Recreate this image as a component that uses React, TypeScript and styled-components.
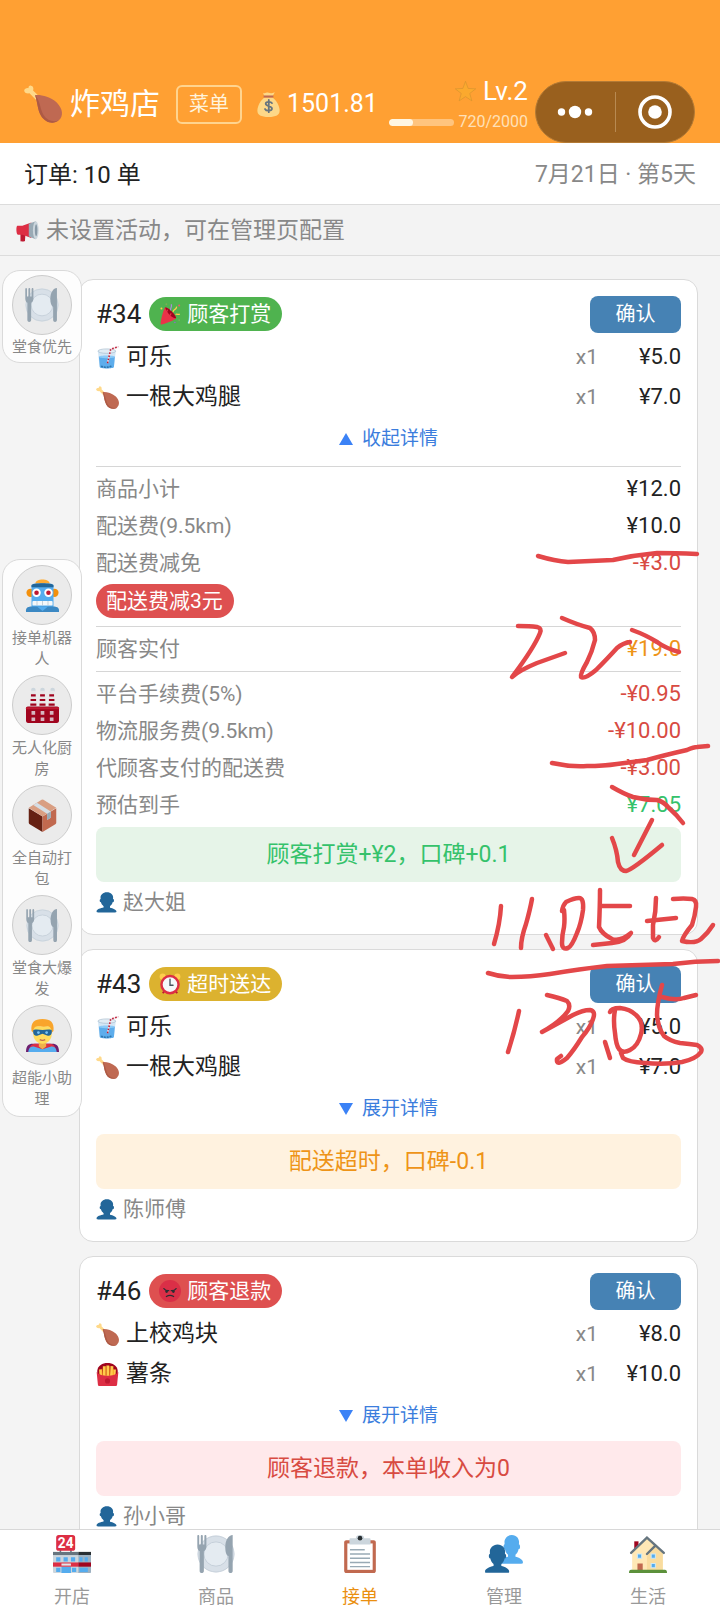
import React from 'react';
import styled, { createGlobalStyle } from 'styled-components';

const GlobalStyle = createGlobalStyle`
  *, *::before, *::after { box-sizing: border-box; }
  body { margin: 0; background: #f4f4f4; }
  body, button { font-family: Roboto, "Noto Sans CJK SC", sans-serif; }
  button { margin: 0; padding: 0; border: 0; background: none; color: inherit; cursor: pointer; }
  svg { display: block; flex: none; }
`;

/* ---------- icons ---------- */

type IconName =
  | 'drumstick' | 'money' | 'star' | 'megaphone' | 'plate' | 'robot' | 'factory' | 'box' | 'hero'
  | 'party' | 'cup' | 'clock' | 'angry' | 'fries' | 'store' | 'clipboard' | 'person' | 'people' | 'house';

const BUST =
  'M24 26.799v-2.566c2-1.348 4.08-3.779 4.703-6.896.186.103.206.17.413.17.991 0 1.709-1.287 1.709-2.873 0-1.562-.823-2.827-1.794-2.865.187-.674.293-1.577.293-2.735C29.324 5.168 26 .527 18.541.527c-6.629 0-10.777 4.641-10.777 8.507 0 1.123.069 2.043.188 2.755-.911.137-1.629 1.352-1.629 2.845 0 1.587.804 2.873 1.796 2.873.206 0 .025-.067.209-.17C8.952 20.453 11 22.885 13 24.232v2.414c-5 .645-12 3.437-12 6.23v1.061C1 35 2.076 35 3.137 35h29.725C33.924 35 35 35 35 33.938v-1.061c0-2.615-6-5.225-11-6.078z';

const drawings: Record<IconName, React.ReactNode> = {
  drumstick: (
    <>
      <path fill="#FFD98A" d="M14 10.500 8.600 5.200C9.400 3.200 8.600.8 6.700.6 4.900.4 4.200 1.600 4.300 3 2.300 2.700.3 3.600.2 5.200c-.1 1.900 2.500 3.300 5 2.700l6 6z" />
      <path fill="#BF6952" d="M10.500 9.500C16 9 24.500 10.500 31 16.500c6 6 6.500 13 2 17-5 4.200-13 2.500-17-4.500-3.200-5.800-3-12-5.500-19.500z" />
      <path fill="#AD5A45" d="M10.500 9.500C13 17 12.800 23.200 16 29c4 7 12 8.700 17 4.500-5 2-11 .5-14.500-5C15 22.500 15.500 15 10.500 9.500z" />
    </>
  ),
  money: (
    <>
      <path fill="#FDD888" d="M12 8h12c5 4 10 12 10 19 0 6-5 9-16 9S2 33 2 27C2 20 7 12 12 8z" />
      <path fill="#FDD888" d="M10 1c3 2 5-1 8 0s5 1 9-.5L24 6H12z" />
      <path fill="#BF6952" d="M11 5h14v3H11z" />
      <path fill="none" stroke="#67757F" strokeWidth="2.600" strokeLinecap="round" d="M23 16c-1-2-9-3-9 1 0 4 9 2.500 9 6.800 0 4-8.500 4-10 .7M18.400 11.500v17.500" />
    </>
  ),
  star: (
    <path fill="#FBA92E" stroke="#D0902F" strokeWidth="1" strokeLinejoin="round" d="M18 .5l4.500 12.300 13 .6-10.200 8 3.600 12.600L18 26.800 7.100 34l3.600-12.600L.5 13.400l13-.6z" />
  ),
  megaphone: (
    <>
      <path fill="#BE1931" d="M7 18l8 1-1 14c0 1-7 1-7 0z" />
      <path fill="#DD2E44" d="M2 9h8l14-5v24l-14-5H3C0 23 0 9 2 9z" />
      <path fill="#99AAB5" d="M20 6 31 2v28l-11-4z" />
      <ellipse cx="31" cy="16" rx="4.500" ry="14" fill="#CCD6DD" />
      <ellipse cx="31.500" cy="16" rx="2" ry="9.500" fill="#8899A6" />
    </>
  ),
  plate: (
    <>
      <circle cx="18" cy="18" r="17.500" fill="#D8E0E8" />
      <circle cx="18" cy="18" r="17" fill="none" stroke="#C6D0D9" strokeWidth=".8" />
      <circle cx="18" cy="18" r="11.500" fill="#E4EBF1" stroke="#C3CED8" strokeWidth=".9" />
      <path fill="#95A4B0" d="M.3 1c0-1.300 1.800-1.300 1.800 0v8h1.500V1c0-1.300 1.900-1.300 1.900 0v8H7V1c0-1.300 1.900-1.300 1.900 0v10c0 2.500-1 3.800-2.400 4.500V34c0 2.700-4 2.700-4 0V15.500C1.200 14.800.3 13.500.3 11z" />
      <path fill="#95A4B0" d="M33.800 0v34c0 2.700-4 2.700-4 0V20c-2-.8-3-4-3-8.500C26.800 5 30 0 33.800 0z" />
    </>
  ),
  robot: (
    <>
      <circle cx="5" cy="15" r="4.500" fill="#F4900C" />
      <circle cx="31" cy="15" r="4.500" fill="#F4900C" />
      <path fill="#FFAC33" d="M10 5C11-1 25-1 26 5z" />
      <path fill="#55ACEE" d="M6 8c0-3 3-3 12-3s12 0 12 3v23H6z" />
      <path fill="#226699" d="M6 7c0-3 24-3 24 0v2H6z" />
      <path fill="#3B88C3" d="M0 34c0-3 3-4 6-4h24c3 0 6 1 6 4v2H0z" />
      <path fill="#55ACEE" d="M12 30h12l-6 5z" />
      <circle cx="11.500" cy="15" r="4.600" fill="#FFF" />
      <circle cx="24.500" cy="15" r="4.600" fill="#FFF" />
      <circle cx="11.500" cy="15" r="2.500" fill="#BE1931" />
      <circle cx="24.500" cy="15" r="2.500" fill="#BE1931" />
      <rect x="7" y="24" width="22" height="5" rx="1" fill="#F5F8FA" />
      <path stroke="#B5C2CC" strokeWidth=".8" d="M12 24v5M18 24v5M24 24v5" />
    </>
  ),
  factory: (
    <>
      <circle cx="8" cy="1" r="2.500" fill="#CCD6DD" />
      <circle cx="18" cy="1" r="2.500" fill="#CCD6DD" />
      <circle cx="29" cy="1" r="2.500" fill="#CCD6DD" />
      {[8, 18, 28].map((x) => (
        <g key={x}>
          <path fill="#E6E7E8" d={`M${x - 2.5} 2h5l1 18h-7z`} />
          <path stroke="#A0041E" strokeWidth="2.400" d={`M${x - 2.6} 7h5.200M${x - 3} 12h6M${x - 3.3} 17h6.600`} />
        </g>
      ))}
      <rect y="19" width="36" height="18" rx="2" fill="#A0041E" />
      <path fill="#BE1931" d="M0 20h36v2H0z" />
      <path fill="#D6B6C0" d="M6 24h4v4H6zM16 24h4v4h-4zM26 24h4v4h-4zM6 31h4v4H6zM16 31h4v4h-4zM26 31h4v4h-4z" />
    </>
  ),
  box: (
    <>
      <path fill="#662113" d="M3 10l15 9v17L4 27.500Q3 27 3 26z" />
      <path fill="#C1694F" d="M33 10l-15 9v17l14-8.500q1-.5 1-1.500z" />
      <path fill="#D99E82" d="M3 9.500 17 .8q1-.6 2 0l14 8.700-15 9.500z" />
      <path fill="#D5DDE4" d="M8 6.500l4-2.500 15 9.500v7l-4 2.500v-7z" />
      <path fill="#99AAB5" d="M23 16l4-2.500v7L23 23z" />
    </>
  ),
  hero: (
    <>
      <path fill="#6D1F6F" d="M0 36c0-7 3-9 7-9h22c4 0 7 2 7 9z" />
      <path fill="#DD2E44" d="M3 36c1-8 4-9 8-9h14c4 0 7 1 8 9z" />
      <path fill="#55ACEE" d="M2.500 36c.5-5 3-6 6-6l9.500 3 9.500-3c3 0 5.500 1 6 6z" />
      <path fill="#EFB04D" d="M14 23h8v7l-4 3-4-3z" />
      <path fill="#FFDC5D" d="M8 8h20v9c0 6-5 10-10 10S8 23 8 17z" />
      <path fill="#F9A52B" d="M6 13C5 4 9 0 18 0s13 4 12 13l-2 2c0-4-1-6-4-7-5 1-9 0-11 0-4 0-5 3-5 7z" />
      <path fill="#226699" d="M8 12c4-1 7 0 10 0s6-1 10 0c1 5-2 7-5 6l-5-2-5 2c-3 1-6-1-5-6z" />
      <circle cx="13.500" cy="14.800" r="1.500" fill="#7AC4F3" />
      <circle cx="22.500" cy="14.800" r="1.500" fill="#7AC4F3" />
      <path fill="none" stroke="#C1694F" strokeWidth="1.400" d="M15 22.500q3 1.500 6 0" />
    </>
  ),
  party: (
    <>
      <path fill="#EA3349" d="M11 7C16 9 26 18 28 24c1 3-23 12-25 11S8 6 11 7z" />
      <path fill="#A0041E" d="M11 7c6 2 15 11 17 17 0 3-8-1-12-6S9 7 11 7z" />
      <path fill="none" stroke="#EA3349" strokeWidth="2" d="M14 11 7 27M20 17 12 29" />
      <path fill="none" stroke="#AA8DD8" strokeWidth="2" d="M19 12c-1-5 3-4 1-10" />
      <path fill="none" stroke="#FFCC4D" strokeWidth="2" d="M23 15c0-6 5-2 6-9M27 19c3-2 4 1 7-1" />
      <circle cx="4" cy="9" r="1.600" fill="#FFCC4D" />
      <circle cx="12" cy="2" r="1.500" fill="#77B255" />
      <circle cx="33" cy="4" r="1.700" fill="#EA596E" />
      <circle cx="33" cy="28" r="1.500" fill="#77B255" />
      <circle cx="26" cy="32" r="1.300" fill="#9266CC" />
    </>
  ),
  cup: (
    <>
      <path fill="#D5E7F5" d="M3 8h28l-3 25c-.5 3-22 3-22.500 0z" />
      <path fill="#5DADEC" d="M4.500 17h25L28 33c-.5 3-21.500 3-22 0z" />
      <path fill="#8CCAF7" d="M4.500 17c0-3 25-3 25 0s-25 3-25 0z" />
      <ellipse cx="17" cy="8" rx="14" ry="3.500" fill="#E1ECF4" stroke="#A5BACB" strokeWidth="1" />
      <path fill="none" stroke="#F3E1E8" strokeWidth="2.400" d="M18 27 23 5l12-4" />
      <path fill="none" stroke="#BE1931" strokeWidth="2.400" strokeDasharray="2.500 2.500" d="M18 27 23 5l12-4" />
      <path fill="none" stroke="#2F76AD" strokeWidth="2.600" strokeDasharray="1 3.500" strokeLinecap="round" d="M9 32q8 3 16-1" />
    </>
  ),
  clock: (
    <>
      <circle cx="6" cy="6" r="5" fill="#FFCC4D" />
      <circle cx="30" cy="6" r="5" fill="#FFCC4D" />
      <path stroke="#BE1931" strokeWidth="3" d="M6 33l4-4M30 33l-4-4" />
      <circle cx="18" cy="19" r="14" fill="#F5F8FA" stroke="#DD2E44" strokeWidth="4" />
      <path fill="none" stroke="#46535C" strokeWidth="2.200" strokeLinecap="round" d="M18 10v10h5" />
    </>
  ),
  angry: (
    <>
      <circle cx="18" cy="18" r="18" fill="#DA2F47" />
      <path fill="none" stroke="#292F33" strokeWidth="2" strokeLinecap="round" d="M8 14q3 4 8 3.500M28 14q-3 4-8 3.500M12 27q6-4 12 0" />
      <circle cx="12.500" cy="19" r="2.200" fill="#292F33" />
      <circle cx="23.500" cy="19" r="2.200" fill="#292F33" />
    </>
  ),
  fries: (
    <>
      <path fill="#A0041E" d="M2 12C3 4 10 0 18 0s15 4 16 12v8H2z" />
      <path fill="none" stroke="#FFCC4D" strokeWidth="4.500" d="M8 22 7 10M13 23V5M18.500 23V4M24 23 25 5M28 22l1-12" />
      <path fill="none" stroke="#F4900C" strokeWidth="1" d="M10 22 9.500 9M15.600 23V5M21.300 23V5M27 22V9" />
      <path fill="#DD2E44" d="M1 14c6 8 28 8 34 0l-2 20c-.3 1.500-1 2-2 2H5c-1 0-1.700-.5-2-2z" />
      <circle cx="18" cy="28" r="4" fill="#BE1931" />
    </>
  ),
  store: (
    <>
      <path stroke="#66757F" strokeWidth="1.500" d="M7 14v4M17 14v4" />
      <rect x="3" y="0" width="18" height="15" rx="2.500" fill="#DD2E44" />
      <text x="12" y="12" textAnchor="middle" fontFamily="Roboto, sans-serif" fontWeight="700" fontSize="13" fill="#FFF">24</text>
      <path fill="#CCD6DD" d="M0 17h36v18q0 1-1 1H1q-1 0-1-1z" />
      <path fill="#66757F" d="M0 16h24v3H0z" />
      <path fill="#292F33" d="M24 16h12v3H24z" />
      <path fill="#9DB1C1" d="M24 19h12v16q0 1-1 1H24z" />
      <path fill="#55ACEE" d="M3 21h4v4H3zM10 21h4v4h-4zM17 21h4v4h-4zM25 21h3v4h-3zM30 21h3v4h-3zM3 31h4v4H3zM8 30h9v6H8zM18 31h4v4h-4zM25 31h8v4h-8z" />
      <path fill="#DD2E44" d="M0 26h24v4H0z" />
      <path fill="#A0041E" d="M24 26h12v4H24z" />
      <path fill="#E1E8ED" d="M8 27h9v2H8z" />
    </>
  ),
  clipboard: (
    <>
      <path fill="#C1694F" d="M33 34c0 1.100-.9 2-2 2H5c-1.100 0-2-.9-2-2V7c0-1.100.9-2 2-2h26c1.100 0 2 .9 2 2z" />
      <path fill="#FFF" d="M6 8h24v25H6z" />
      <path fill="#CCD6DD" d="M9 3h5c0-4 8-4 8 0h5q1 0 1 1v5H8V4q0-1 1-1z" />
      <circle cx="18" cy="3" r="2.200" fill="#292F33" />
      <path stroke="#99AAB5" strokeWidth="1.300" d="M8.500 14h14M8.500 18h19M8.500 22h19M8.500 26h19M8.500 30h19" />
    </>
  ),
  person: <path fill="#226699" d={BUST} />,
  people: (
    <>
      <path fill="#55ACEE" transform="translate(13.500 -.5) scale(.64 .79)" d={BUST} />
      <path fill="#226699" transform="translate(-.6 8.500) scale(.67 .78)" d={BUST} />
    </>
  ),
  house: (
    <>
      <path fill="#A0041E" d="M5 6h4v9H5z" />
      <path fill="#FFE8B6" d="M3 16 17 3l15 13v18H3z" />
      <path fill="#F9DC9F" d="M17 17l7-7 8 7v17H17z" />
      <path fill="none" stroke="#66757F" strokeWidth="2.200" strokeLinecap="round" d="M2 17 17 2.500 33 17M17 18l8-8" />
      <path fill="#55ACEE" stroke="#CDE8F4" strokeWidth="1" d="M8 18h4v4H8zM21 18h4v4h-4zM21 27h4v4h-4z" />
      <path fill="#C1694F" d="M8 27h5v7H8z" />
      <path fill="#5C913B" d="M2 33h32q2 0 2 3H0q0-3 2-3z" />
    </>
  ),
};

const Icon = ({ name, size }: { name: IconName; size: number }) => (
  <svg width={size} height={size} viewBox="0 0 36 36" overflow="visible" aria-hidden="true">
    {drawings[name]}
  </svg>
);

/* ---------- page frame ---------- */

const Page = styled.div`
  display: flex;
  flex-direction: column;
  height: 100vh;
  overflow: hidden;
  background: #f4f4f4;
  color: #222;
`;

const Header = styled.header`
  display: flex;
  align-items: center;
  flex: none;
  height: 143px;
  padding: 65px 25px 0 24px;
  background: #ffa033;
  color: #fff;
`;

const ShopName = styled.h1`
  margin: 0 16px 0 8px;
  font-size: 30px;
  font-weight: 400;
  line-height: 40px;
  white-space: nowrap;
`;

const MenuButton = styled.button`
  width: 66px;
  height: 39px;
  border: 2px solid #ffd48f;
  border-radius: 6px;
  color: #fff3dc;
  font-size: 20px;
  line-height: 28px;
`;

const Balance = styled.div`
  display: flex;
  align-items: center;
  gap: 6px;
  margin-left: 14px;
  font-size: 25px;
  line-height: 32px;
`;

const LevelBlock = styled.div`
  width: 139px;
  margin: 6px 7px 0 auto;
`;

const LevelLine = styled.div`
  display: flex;
  align-items: center;
  justify-content: flex-end;
  gap: 7px;
  font-size: 26px;
  line-height: 30px;
`;

const ProgressLine = styled.div`
  display: flex;
  align-items: center;
  gap: 4px;
  color: #ffe0b8;
  font-size: 16px;
  line-height: 32px;
`;

const Track = styled.div`
  flex: 1;
  height: 7px;
  border-radius: 4px;
  overflow: hidden;
  background: #ffc47e;
`;

const Fill = styled.div`
  height: 100%;
  border-radius: 4px;
  background: #fff6e2;
`;

const Capsule = styled.div`
  display: flex;
  align-items: center;
  align-self: flex-end;
  width: 160px;
  height: 62px;
  border: 1px solid #b37a35;
  border-radius: 31px;
  background: #99601e;
`;

const CapsuleButton = styled.button`
  display: flex;
  flex: 1;
  align-items: center;
  justify-content: center;
  height: 40px;
  & + & { border-left: 1px solid #b88a52; }
`;

const OrdersBar = styled.div`
  display: flex;
  align-items: center;
  justify-content: space-between;
  flex: none;
  height: 62px;
  padding: 2px 24px 0;
  border-bottom: 1px solid #dcdcdc;
  background: #fff;
`;

const OrderCount = styled.span`
  font-size: 24px;
  line-height: 32px;
`;

const Today = styled.span`
  color: #888;
  font-size: 23px;
  line-height: 32px;
`;

const Notice = styled.div`
  display: flex;
  align-items: center;
  gap: 7px;
  flex: none;
  height: 51px;
  padding: 2px 16px 0;
  border-bottom: 1px solid #dcdcdc;
  background: #f3f3f3;
  color: #888;
  font-size: 23px;
  line-height: 32px;
`;

const Scroller = styled.main`
  flex: 1;
  min-height: 0;
  overflow-y: auto;
  scrollbar-width: none;
`;

const Content = styled.div`
  position: relative;
  display: flex;
  align-items: flex-start;
`;

/* ---------- helper docks ---------- */

const Docks = styled.aside`
  z-index: 1;
  display: flex;
  flex: none;
  flex-direction: column;
  gap: 196px;
  width: 80px;
  margin: 14px -3px 0 2px;
`;

const Dock = styled.div<{ $compact?: boolean }>`
  display: flex;
  flex-direction: column;
  align-items: center;
  gap: 5px;
  padding: ${(p) => (p.$compact ? '4px 0' : '5px 0 6px')};
  border: 1px solid #dadada;
  border-radius: 18px;
  background: #fdfdfd;
`;

const Helper = styled.button<{ $compact?: boolean }>`
  display: flex;
  flex-direction: column;
  align-items: center;
  gap: ${(p) => (p.$compact ? 2 : 3)}px;
  width: 61px;
  color: #888;
  font-size: 15px;
  line-height: 21px;
`;

const HelperCircle = styled.span`
  display: flex;
  align-items: center;
  justify-content: center;
  width: 60px;
  height: 60px;
  border: 1px solid #ccc;
  border-radius: 50%;
  background: #ebebeb;
`;

/* ---------- order cards ---------- */

const CardList = styled.div`
  display: flex;
  flex: 1;
  flex-direction: column;
  gap: 14px;
  min-width: 0;
  padding: 23px 22px 16px 0;
`;

const Card = styled.article`
  padding: 16px;
  border: 1px solid #dadada;
  border-radius: 14px;
  background: #fff;
`;

const CardHeader = styled.header`
  display: flex;
  align-items: center;
  gap: 8px;
  height: 36px;
  margin-bottom: 5px;
`;

const OrderNo = styled.h2`
  margin: 0;
  font-size: 26px;
  font-weight: 400;
  line-height: 34px;
`;

const tones = {
  green: { tag: '#4fb34f', soft: '#e6f4e8', text: '#35c26b' },
  yellow: { tag: '#dcb22f', soft: '#fff2df', text: '#ee9418' },
  red: { tag: '#de5050', soft: '#ffe9eb', text: '#d84b42' },
};
type Tone = keyof typeof tones;

const Tag = styled.span<{ $tone: Tone }>`
  display: inline-flex;
  align-items: center;
  gap: 6px;
  height: 34px;
  padding: 0 11px 0 10px;
  border-radius: 17px;
  background: ${(p) => tones[p.$tone].tag};
  color: #fff;
  font-size: 21px;
  line-height: 34px;
`;

const ConfirmButton = styled.button`
  width: 91px;
  height: 37px;
  margin-left: auto;
  border-radius: 8px;
  background: #4682b4;
  color: #fff;
  font-size: 20px;
  line-height: 28px;
`;

const Item = styled.div`
  display: flex;
  align-items: center;
  height: 40px;
  font-size: 23px;
  line-height: 32px;
`;

const ItemName = styled.span`
  flex: 1;
  margin-left: 7px;
`;

const Quantity = styled.span`
  color: #888;
  font-size: 21px;
`;

const Price = styled.span`
  width: 83px;
  font-size: 22px;
  text-align: right;
`;

const Toggle = styled.button`
  display: flex;
  align-items: center;
  justify-content: center;
  gap: 9px;
  width: 100%;
  height: 44px;
  margin-bottom: 3px;
  color: #3b7ddd;
  font-size: 19px;
  line-height: 28px;
`;

const Section = styled.div`
  padding: 3px 0 4px;
  border-top: 1px solid #d6d6d6;
`;

const Breakdown = styled.div`
  margin-top: 5px;
`;

const Line = styled.div<{ $color?: string }>`
  display: flex;
  align-items: center;
  justify-content: space-between;
  height: 37px;
  color: #888;
  font-size: 21px;
  line-height: 30px;
  & > span:last-child {
    color: ${(p) => p.$color ?? '#222'};
    font-size: 22px;
  }
`;

const CouponRow = styled.div`
  display: flex;
  padding: 3px 0 4px;
`;

const Banner = styled.div<{ $tone: Tone }>`
  display: flex;
  align-items: center;
  justify-content: center;
  height: 55px;
  margin-bottom: 5px;
  border-radius: 8px;
  background: ${(p) => tones[p.$tone].soft};
  color: ${(p) => tones[p.$tone].text};
  font-size: 23px;
  line-height: 32px;
`;

const Customer = styled.div`
  display: flex;
  align-items: center;
  gap: 6px;
  height: 31px;
  color: #888;
  font-size: 21px;
  line-height: 31px;
`;

const Scribble = styled.svg`
  position: absolute;
  z-index: 2;
  top: 284px;
  right: 0;
  pointer-events: none;
`;

/* ---------- bottom navigation ---------- */

const Nav = styled.nav`
  display: flex;
  flex: none;
  height: 79px;
  border-top: 1px solid #d8d8d8;
  background: #fff;
`;

const NavButton = styled.button<{ $active?: boolean }>`
  display: flex;
  flex: 1;
  flex-direction: column;
  align-items: center;
  gap: 14px;
  padding-top: 5px;
  color: ${(p) => (p.$active ? '#ea8f10' : '#999')};
  font-size: 18px;
  line-height: 20px;
`;

/* ---------- data ---------- */

interface Order {
  no: number;
  tone: Tone;
  tagIcon: IconName;
  tag: string;
  items: { icon: IconName; name: string; price: string }[];
  banner: string;
  customer: string;
  open?: boolean;
}

const orders: Order[] = [
  {
    no: 34, tone: 'green', tagIcon: 'party', tag: '顾客打赏', open: true,
    items: [
      { icon: 'cup', name: '可乐', price: '¥5.0' },
      { icon: 'drumstick', name: '一根大鸡腿', price: '¥7.0' },
    ],
    banner: '顾客打赏+¥2，口碑+0.1', customer: '赵大姐',
  },
  {
    no: 43, tone: 'yellow', tagIcon: 'clock', tag: '超时送达',
    items: [
      { icon: 'cup', name: '可乐', price: '¥5.0' },
      { icon: 'drumstick', name: '一根大鸡腿', price: '¥7.0' },
    ],
    banner: '配送超时，口碑-0.1', customer: '陈师傅',
  },
  {
    no: 46, tone: 'red', tagIcon: 'angry', tag: '顾客退款',
    items: [
      { icon: 'drumstick', name: '上校鸡块', price: '¥8.0' },
      { icon: 'fries', name: '薯条', price: '¥10.0' },
    ],
    banner: '顾客退款，本单收入为0', customer: '孙小哥',
  },
];

const helpers: { icon: IconName; label: string }[] = [
  { icon: 'robot', label: '接单机器人' },
  { icon: 'factory', label: '无人化厨房' },
  { icon: 'box', label: '全自动打包' },
  { icon: 'plate', label: '堂食大爆发' },
  { icon: 'hero', label: '超能小助理' },
];

const tabs: { icon: IconName; label: string }[] = [
  { icon: 'store', label: '开店' },
  { icon: 'plate', label: '商品' },
  { icon: 'clipboard', label: '接单' },
  { icon: 'people', label: '管理' },
  { icon: 'house', label: '生活' },
];

const strokes = [
  'M538 556Q555 561 568 562 590 561 613 560 635 555 657 553 675 553 697 554',
  'M518 626Q530 626 537 627 542 628 540 633 534 648 512 677 520 670 537 663L565 653',
  'M562 618Q578 625 590 628 595 632 595 640 592 652 587 662 580 674 581 677 584 680 596 670 608 658 617 648 623 643 630 642',
  'M632 630Q646 635 657 642 665 648 679 652',
  'M552 763Q570 767 587 766 604 766 617 764 633 762 647 760 665 755 687 750 694 747 697 747L708 746',
  'M612 787Q624 794 633 797 645 800 657 800 664 802 668 807 677 815 683 823',
  'M652 820 634 855',
  'M612 838Q617 850 618 862 620 871 626 871 632 870 662 845',
  'M501 906Q500 924 494 944',
  'M532 899Q530 910 526 924 521 938 521 948',
  'M546 935 553 949',
  'M562 911Q563 905 566 902 574 898 579 898 584 898 583 910 581 924 577 933 572 946 568 948 562 950 562 943 562 935 564 927 565 920 564 910',
  'M600 890Q600 906 599 927 602 934 612 939 620 942 631 933 626 942 612 943L593 945',
  'M602 906 630 906',
  'M656 898Q656 912 653 925L653 938Q655 943 659 937',
  'M647 921 676 918',
  'M673 899Q684 898 692 899 697 900 696 907 695 916 692 925 683 936 682 941 695 944 701 939 708 933 713 925',
  'M488 973Q500 977 512 977 530 977 550 974 580 969 607 966 640 965 673 964 695 961 718 961',
  'M519 1011Q515 1030 508 1052',
  'M547 995Q560 998 567 1001 571 1005 568 1011 560 1022 542 1032 555 1025 573 1015 583 1010 590 1010 596 1011 593 1019 590 1028 582 1037 574 1050 567 1058 556 1067 557 1059L561 1056',
  'M605 1042 610 1058',
  'M615 1010Q613 1020 615 1033 616 1045 619 1049 623 1054 630 1050 638 1046 641 1034 644 1022 636 1015 630 1009 620 1008 611 1008 610 1012',
  'M662 985Q657 1003 657 1015 658 1028 664 1036 670 1041 680 1043 690 1044 697 1045 703 1048 701 1052 696 1059 682 1062 665 1065 645 1063 628 1062 623 1058L621 1053',
  'M662 997Q676 1001 684 998L696 995',
];

const OrderCard = ({ order }: { order: Order }) => (
  <Card>
    <CardHeader>
      <OrderNo>#{order.no}</OrderNo>
      <Tag $tone={order.tone}>
        <Icon name={order.tagIcon} size={22} />
        {order.tag}
      </Tag>
      <ConfirmButton type="button">确认</ConfirmButton>
    </CardHeader>
    {order.items.map((item) => (
      <Item key={item.name}>
        <Icon name={item.icon} size={23} />
        <ItemName>{item.name}</ItemName>
        <Quantity>x1</Quantity>
        <Price>{item.price}</Price>
      </Item>
    ))}
    <Toggle type="button" aria-expanded={!!order.open}>
      <svg width="14" height="12" viewBox="0 0 14 12" aria-hidden="true">
        <path fill="#3b82f6" d={order.open ? 'M7 0l7 12H0z' : 'M0 0h14L7 12z'} />
      </svg>
      {order.open ? '收起详情' : '展开详情'}
    </Toggle>
    {order.open && (
      <Breakdown>
        <Section>
          <Line><span>商品小计</span><span>¥12.0</span></Line>
          <Line><span>配送费(9.5km)</span><span>¥10.0</span></Line>
          <Line $color="#d84b42"><span>配送费减免</span><span>-¥3.0</span></Line>
          <CouponRow><Tag $tone="red">配送费减3元</Tag></CouponRow>
        </Section>
        <Section>
          <Line $color="#ee9418"><span>顾客实付</span><span>¥19.0</span></Line>
        </Section>
        <Section>
          <Line $color="#d84b42"><span>平台手续费(5%)</span><span>-¥0.95</span></Line>
          <Line $color="#d84b42"><span>物流服务费(9.5km)</span><span>-¥10.00</span></Line>
          <Line $color="#d84b42"><span>代顾客支付的配送费</span><span>-¥3.00</span></Line>
          <Line $color="#35c26b"><span>预估到手</span><span>¥7.05</span></Line>
        </Section>
      </Breakdown>
    )}
    <Banner $tone={order.tone}>{order.banner}</Banner>
    <Customer>
      <Icon name="person" size={21} />
      {order.customer}
    </Customer>
  </Card>
);

export default function App() {
  const progress = { now: 720, goal: 2000 };
  return (
    <Page>
      <GlobalStyle />
      <Header>
        <Icon name="drumstick" size={38} />
        <ShopName>炸鸡店</ShopName>
        <MenuButton type="button">菜单</MenuButton>
        <Balance>
          <Icon name="money" size={25} />
          1501.81
        </Balance>
        <LevelBlock>
          <LevelLine>
            <Icon name="star" size={21} />
            Lv.2
          </LevelLine>
          <ProgressLine>
            <Track>
              <Fill style={{ width: `${(progress.now / progress.goal) * 100}%` }} />
            </Track>
            {progress.now}/{progress.goal}
          </ProgressLine>
        </LevelBlock>
        <Capsule>
          <CapsuleButton type="button" aria-label="更多">
            <svg width="36" height="14" viewBox="0 0 36 14" fill="#fff">
              <circle cx="4.500" cy="7" r="3.700" />
              <circle cx="18" cy="7" r="6.200" />
              <circle cx="31.500" cy="7" r="3.700" />
            </svg>
          </CapsuleButton>
          <CapsuleButton type="button" aria-label="关闭">
            <svg width="34" height="34" viewBox="0 0 34 34">
              <circle cx="17" cy="17" r="15" fill="none" stroke="#fff" strokeWidth="3.600" />
              <circle cx="17" cy="17" r="6.800" fill="#fff" />
            </svg>
          </CapsuleButton>
        </Capsule>
      </Header>
      <OrdersBar>
        <OrderCount>订单: 10 单</OrderCount>
        <Today>7月21日 · 第5天</Today>
      </OrdersBar>
      <Notice>
        <Icon name="megaphone" size={23} />
        未设置活动，可在管理页配置
      </Notice>
      <Scroller>
        <Content>
          <Docks>
            <Dock $compact>
              <Helper type="button" $compact>
                <HelperCircle><Icon name="plate" size={34} /></HelperCircle>
                堂食优先
              </Helper>
            </Dock>
            <Dock>
              {helpers.map((h) => (
                <Helper type="button" key={h.label}>
                  <HelperCircle><Icon name={h.icon} size={33} /></HelperCircle>
                  {h.label}
                </Helper>
              ))}
            </Dock>
          </Docks>
          <CardList>
            {orders.map((order) => <OrderCard key={order.no} order={order} />)}
          </CardList>
          <Scribble width="240" height="540" viewBox="480 540 240 540" aria-hidden="true">
            <g fill="none" stroke="#e34749" strokeWidth="4.500" strokeLinecap="round" strokeLinejoin="round">
              {strokes.map((d) => <path key={d} d={d} />)}
            </g>
          </Scribble>
        </Content>
      </Scroller>
      <Nav>
        {tabs.map((tab, i) => (
          <NavButton type="button" key={tab.label} $active={i === 2}>
            <Icon name={tab.icon} size={38} />
            {tab.label}
          </NavButton>
        ))}
      </Nav>
    </Page>
  );
}
